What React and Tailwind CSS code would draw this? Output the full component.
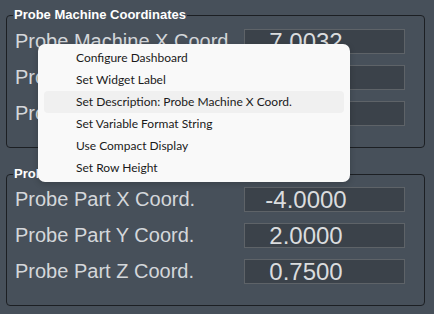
import React from 'react';

const MACHINE = [
  { label: 'Probe Machine X Coord.', value: '7.0032' },
  { label: 'Probe Machine Y Coord.', value: '2.0032' },
  { label: 'Probe Machine Z Coord.', value: '0.7500' },
];

const PART = [
  { label: 'Probe Part X Coord.', value: '-4.0000' },
  { label: 'Probe Part Y Coord.', value: '2.0000' },
  { label: 'Probe Part Z Coord.', value: '0.7500' },
];

const MENU = [
  'Configure Dashboard',
  'Set Widget Label',
  'Set Description: Probe Machine X Coord.',
  'Set Variable Format String',
  'Use Compact Display',
  'Set Row Height',
];

function Group({ title, rows, height, padTop }) {
  return (
    <div className={`relative ml-[6px] w-[419px] ${height} rounded-[4px] border border-[#1c1f23]`}>
      <div className="absolute left-[6px] top-[-9px] bg-[#47505a] px-[1px] text-[13px] font-bold leading-[16px] text-white">
        {title}
      </div>
      <div className={`flex flex-col gap-[11px] ${padTop} pl-[8px]`}>
        {rows.map((r) => (
          <div key={r.label} className="flex h-[25px] items-center">
            <div className="w-[229px] whitespace-nowrap text-[20px] leading-[25px] text-[#d4d7da]">{r.label}</div>
            <div className="flex h-[25px] w-[161px] items-center justify-center border border-[#5e6368] bg-[#3b424a] pr-[37px] text-[24px] leading-[23px] text-[#dadcde]">
              {r.value}
            </div>
          </div>
        ))}
      </div>
    </div>
  );
}

export default function App() {
  return (
    <div className="relative h-[314px] w-[434px] overflow-hidden bg-[#47505a] pt-[15px] font-['Liberation_Sans',Arial,sans-serif]">
      <Group title="Probe Machine Coordinates" rows={MACHINE} height="h-[133px]" padTop="pt-[13px]" />
      <div className="h-[26px]" />
      <Group title="Probe Part Coordinates" rows={PART} height="h-[132px]" padTop="pt-[12px]" />

      {/* context menu */}
      <div className="absolute left-[38px] top-[44px] w-[312px] rounded-[7px] bg-[#f9f9f9] py-[3px] font-['Lato',sans-serif] shadow-[0_2px_6px_rgba(0,0,0,0.2)]">
        {MENU.map((m, i) => (
          <div
            key={m}
            className={`mx-[6px] flex h-[22px] items-center rounded-[4px] pl-[32px] text-[12px] text-[#1a1a1a] ${i === 2 ? 'bg-[#f0f0f0]' : ''}`}
          >
            {m}
          </div>
        ))}
      </div>
    </div>
  );
}
